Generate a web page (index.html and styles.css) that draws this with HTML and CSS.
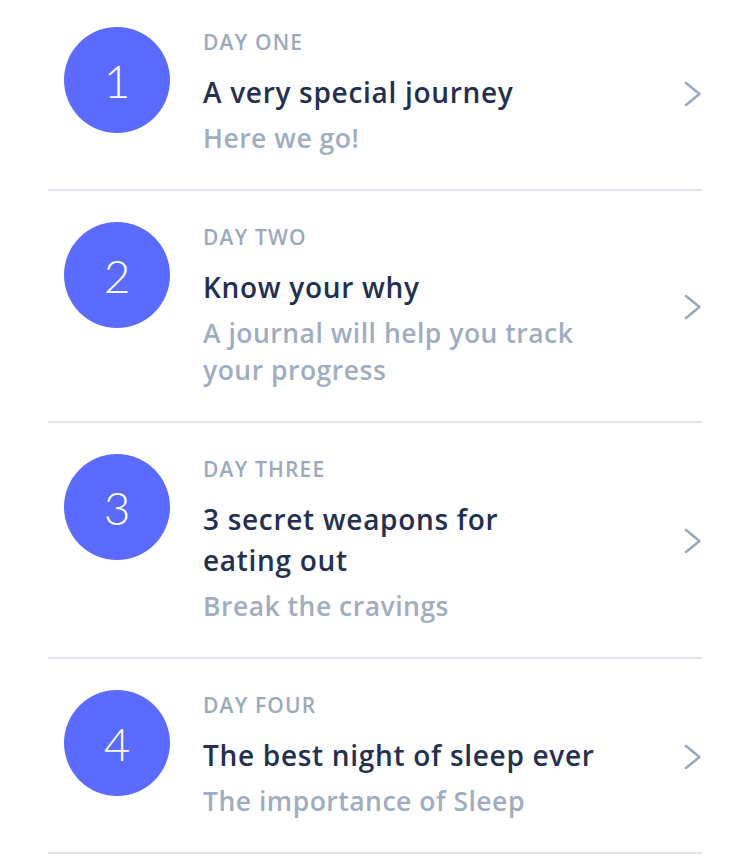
FILE: index.html
```html
<!DOCTYPE html>
<html lang="en">
<head>
<meta charset="utf-8">
<title>Journey</title>
<link rel="stylesheet" href="styles.css">
</head>
<body>
<ul class="days">
  <li class="day">
    <div class="badge">1</div>
    <div class="info">
      <div class="label">DAY ONE</div>
      <div class="title">A very special journey</div>
      <div class="sub">Here we go!</div>
    </div>
    <svg class="chev" viewBox="0 0 18 26" width="18" height="26"><path d="M2 2 L15.5 13 L2 24" fill="none" stroke="#9aa8bd" stroke-width="2.6" stroke-linecap="round" stroke-linejoin="round"/></svg>
  </li>
  <li class="day">
    <div class="badge">2</div>
    <div class="info">
      <div class="label">DAY TWO</div>
      <div class="title">Know your why</div>
      <div class="sub">A journal will help you track your progress</div>
    </div>
    <svg class="chev" viewBox="0 0 18 26" width="18" height="26"><path d="M2 2 L15.5 13 L2 24" fill="none" stroke="#9aa8bd" stroke-width="2.6" stroke-linecap="round" stroke-linejoin="round"/></svg>
  </li>
  <li class="day">
    <div class="badge">3</div>
    <div class="info">
      <div class="label">DAY THREE</div>
      <div class="title">3 secret weapons for<br>eating out</div>
      <div class="sub">Break the cravings</div>
    </div>
    <svg class="chev" viewBox="0 0 18 26" width="18" height="26"><path d="M2 2 L15.5 13 L2 24" fill="none" stroke="#9aa8bd" stroke-width="2.6" stroke-linecap="round" stroke-linejoin="round"/></svg>
  </li>
  <li class="day">
    <div class="badge">4</div>
    <div class="info">
      <div class="label">DAY FOUR</div>
      <div class="title">The best night of sleep ever</div>
      <div class="sub">The importance of Sleep</div>
    </div>
    <svg class="chev" viewBox="0 0 18 26" width="18" height="26"><path d="M2 2 L15.5 13 L2 24" fill="none" stroke="#9aa8bd" stroke-width="2.6" stroke-linecap="round" stroke-linejoin="round"/></svg>
  </li>
</ul>
</body>
</html>
```
FILE: styles.css
```css
html, body {
  margin: 0;
  padding: 0;
  background: #ffffff;
}
body {
  font-family: "Open Sans", Lato, sans-serif;
}
.days {
  list-style: none;
  margin: -4px 48px 0 48px;
  padding: 0;
}
.day {
  display: flex;
  align-items: center;
  padding: 34px 0 32px 16px;
  border-bottom: 2px solid #e1e4f0;
}
.badge {
  align-self: flex-start;
  flex: 0 0 106px;
  width: 106px;
  height: 106px;
  margin-top: -3px;
  border-radius: 50%;
  background: #5b6bff;
  color: #ffffff;
  font-family: Lato, sans-serif;
  font-weight: 300;
  font-size: 46px;
  display: flex;
  align-items: center;
  justify-content: center;
}
.info {
  flex: 1;
  margin-left: 33px;
  max-width: 415px;
}
.label {
  font-size: 21px;
  line-height: 24px;
  font-weight: 600;
  letter-spacing: 1.2px;
  color: #9ca9bd;
}
.title {
  margin-top: 18px;
  font-size: 28px;
  line-height: 41px;
  font-weight: 600;
  letter-spacing: 0.7px;
  color: #243050;
}
.sub {
  margin-top: 7px;
  font-size: 26.5px;
  line-height: 37px;
  font-weight: 600;
  letter-spacing: 0.5px;
  color: #a0adc1;
}
.chev {
  margin-left: auto;
  flex: 0 0 18px;
}
```
